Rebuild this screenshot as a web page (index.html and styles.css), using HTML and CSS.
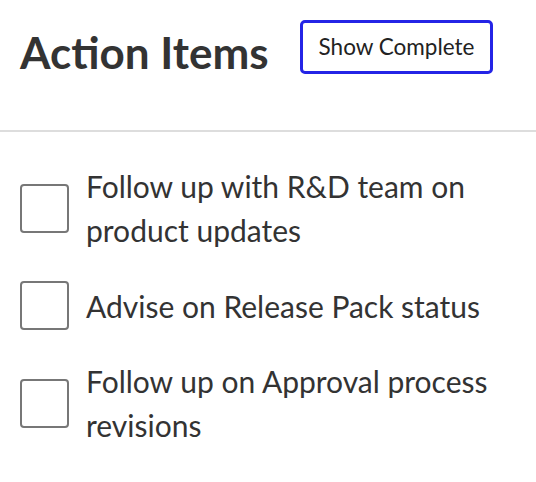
FILE: index.html
```html
<!DOCTYPE html>
<html>
<head>
<meta charset="utf-8">
<link rel="stylesheet" href="styles.css">
</head>
<body>
<div class="panel">
  <header class="header">
    <h1 class="title">Action Items</h1>
    <button class="toggle">Show Complete</button>
  </header>
  <ul class="items">
    <li class="item"><span class="box"></span><span class="label">Follow up with R&amp;D team on product updates</span></li>
    <li class="item"><span class="box"></span><span class="label">Advise on Release Pack status</span></li>
    <li class="item"><span class="box"></span><span class="label">Follow up on Approval process revisions</span></li>
  </ul>
</div>
</body>
</html>
```
FILE: styles.css
```css
html, body {
  margin: 0;
  background: #fff;
}
body {
  font-family: Lato, "Open Sans", sans-serif;
  color: #333;
}
.header {
  display: flex;
  align-items: flex-start;
  gap: 31px;
  padding: 20px 20px 0;
  height: 110px;
  border-bottom: 2px solid #ddd;
}
.title {
  margin: 6px 0 0;
  font-size: 44px;
  font-weight: 700;
  line-height: 53px;
  color: #333;
}
.toggle {
  font-family: Lato, sans-serif;
  font-size: 22.5px;
  line-height: 24px;
  color: #222;
  background: #fff;
  border: 3px solid #2424e6;
  border-radius: 5px;
  padding: 12px 16px;
}
.items {
  list-style: none;
  margin: 0;
  padding: 32px 20px 0;
  display: flex;
  flex-direction: column;
  gap: 29px;
}
.item {
  display: flex;
  align-items: center;
  gap: 17px;
}
.box {
  flex: none;
  width: 45px;
  height: 45px;
  border: 2px solid #777;
  border-radius: 4px;
}
.label {
  font-size: 30px;
  line-height: 44px;
  max-width: 420px;
}
```
